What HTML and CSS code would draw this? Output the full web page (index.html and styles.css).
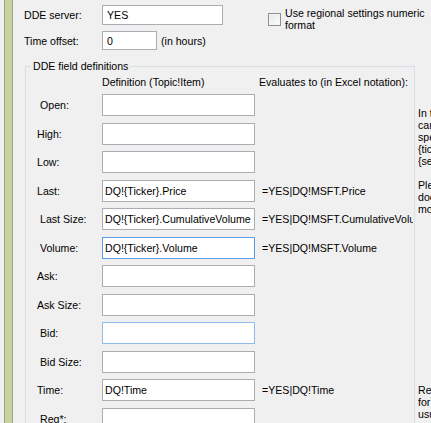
FILE: index.html
```
<!DOCTYPE html>
<html>
<head>
<meta charset="utf-8">
<link rel="stylesheet" href="styles.css">
</head>
<body>
<div class="app">
  <div class="strip"></div>
  <div class="main">
    <div class="top">
      <div class="row r1">
        <span class="lbl">DDE server:</span>
        <input class="tb w121" type="text" value="YES">
        <label class="chk"><input class="cb" type="checkbox"><span class="chk-text">Use regional settings numeric<br>format</span></label>
      </div>
      <div class="row r2">
        <span class="lbl">Time offset:</span>
        <input class="tb w55" type="text" value="0">
        <span class="unit">(in hours)</span>
      </div>
    </div>
    <div class="lower">
      <fieldset class="group">
        <legend>DDE field definitions</legend>
        <div class="head">
          <span></span>
          <span class="h-def">Definition (Topic!Item)</span>
          <span class="h-eval">Evaluates to (in Excel notation):</span>
        </div>
        <div class="fields">
          <span class="flbl ind">Open:</span><input class="tb fin" type="text" value=""><span class="ev"></span>
          <span class="flbl">High:</span><input class="tb fin" type="text" value=""><span class="ev"></span>
          <span class="flbl">Low:</span><input class="tb fin" type="text" value=""><span class="ev"></span>
          <span class="flbl">Last:</span><input class="tb fin" type="text" value="DQ!{Ticker}.Price"><span class="ev">=YES|DQ!MSFT.Price</span>
          <span class="flbl ind">Last Size:</span><input class="tb fin" type="text" value="DQ!{Ticker}.CumulativeVolume"><span class="ev">=YES|DQ!MSFT.CumulativeVolume</span>
          <span class="flbl ind">Volume:</span><input class="tb fin focus" type="text" value="DQ!{Ticker}.Volume"><span class="ev">=YES|DQ!MSFT.Volume</span>
          <span class="flbl">Ask:</span><input class="tb fin" type="text" value=""><span class="ev"></span>
          <span class="flbl">Ask Size:</span><input class="tb fin" type="text" value=""><span class="ev"></span>
          <span class="flbl ind">Bid:</span><input class="tb fin hover" type="text" value=""><span class="ev"></span>
          <span class="flbl ind">Bid Size:</span><input class="tb fin" type="text" value=""><span class="ev"></span>
          <span class="flbl">Time:</span><input class="tb fin" type="text" value="DQ!Time"><span class="ev">=YES|DQ!Time</span>
          <span class="flbl ind">Req*:</span><input class="tb fin" type="text" value=""><span class="ev"></span>
        </div>
      </fieldset>
      <div class="notes">
        <div class="block">
          <div>In the definition fields you</div>
          <div>can use the following</div>
          <div>special tags:</div>
          <div>{ticker} - ticker symbol</div>
          <div>{security} - security name</div>
          <div>&nbsp;</div>
          <div>Please refer to the</div>
          <div>documentation for</div>
          <div>more information.</div>
        </div>
        <div class="block b2">
          <div>Req* - request field used</div>
          <div>for quote requests, leave</div>
          <div>usually empty.</div>
        </div>
      </div>
    </div>
  </div>
</div>
</body>
</html>
```
FILE: styles.css
```
html, body {
  margin: 0;
  padding: 0;
}
body {
  background: #f0f0f0;
  font-family: "Liberation Sans", Arial, sans-serif;
  font-size: 10.6px;
  line-height: 12px;
  color: #000;
  width: 431px;
  height: 423px;
  overflow: hidden;
}
.app {
  display: flex;
  height: 423px;
  overflow: hidden;
}
.strip {
  flex: none;
  width: 7px;
  margin-left: 4px;
  border-left: 1px solid #9ba48b;
  border-right: 1px solid #9ba48b;
  background: #c6d2a0;
}
.main {
  flex: 1;
  min-width: 0;
  display: flex;
  flex-direction: column;
}
.top {
  padding-left: 11px;
  padding-top: 5px;
}
.row {
  display: flex;
  align-items: center;
}
.r1 {
  height: 20px;
}
.r2 {
  height: 19px;
  margin-top: 6px;
}
.lbl {
  width: 78px;
  flex: none;
}
.tb {
  box-sizing: border-box;
  border: 1px solid #abadb3;
  background: #fff;
  font: inherit;
  color: #000;
  padding: 0 2px;
  margin: 0;
  height: 20px;
  outline: none;
  border-radius: 0;
}
.w121 {
  width: 121px;
  padding-left: 4px;
}
.w55 {
  width: 55px;
  height: 19px;
  padding-left: 4px;
}
.unit {
  margin-left: 4px;
}
.chk {
  display: flex;
  align-items: center;
  gap: 4px;
  margin-left: 45px;
  align-self: flex-start;
  margin-top: 2px;
  white-space: nowrap;
}
.cb {
  appearance: none;
  -webkit-appearance: none;
  width: 13px;
  height: 13px;
  margin: 0;
  box-sizing: border-box;
  border: 1px solid #8e8f8f;
  background: linear-gradient(135deg, #e6e6e6, #ffffff);
  box-shadow: inset 0 0 0 1px #f4f4f4;
  flex: none;
}
.lower {
  display: flex;
  margin-top: 10px;
  flex: 1;
  min-height: 0;
}
.group {
  flex: none;
  box-sizing: border-box;
  width: 390px;
  height: 420px;
  margin: 0 0 0 12px;
  padding: 0;
  border: 1px solid #d5dfe5;
  min-width: 0;
}
.group legend {
  margin-left: 5px;
  padding: 0 2px;
  line-height: 12px;
}
.head {
  display: grid;
  grid-template-columns: 76px 153px 1fr;
  margin-top: 4px;
  white-space: nowrap;
}
.h-eval {
  padding-left: 4px;
}
.fields {
  display: grid;
  grid-template-columns: 76px 153px 1fr;
  grid-auto-rows: 22px;
  row-gap: 6.5px;
  align-items: center;
  margin-top: 6px;
}
.flbl {
  padding-left: 11px;
  white-space: nowrap;
}
.flbl.ind {
  padding-left: 14px;
}
.fin {
  width: 153px;
  height: 22px;
  padding-left: 2px;
  padding-right: 1px;
}
.focus {
  border-color: #5c9ee3;
}
.hover {
  border-color: #8fbcea;
}
.ev {
  padding-left: 7px;
  margin-right: 1px;
  white-space: nowrap;
  overflow: hidden;
}
.notes {
  flex: 1;
  min-width: 0;
  margin-left: 3px;
  padding-top: 47px;
  white-space: nowrap;
  overflow: hidden;
}
.b2 {
  margin-top: 169px;
}
```
